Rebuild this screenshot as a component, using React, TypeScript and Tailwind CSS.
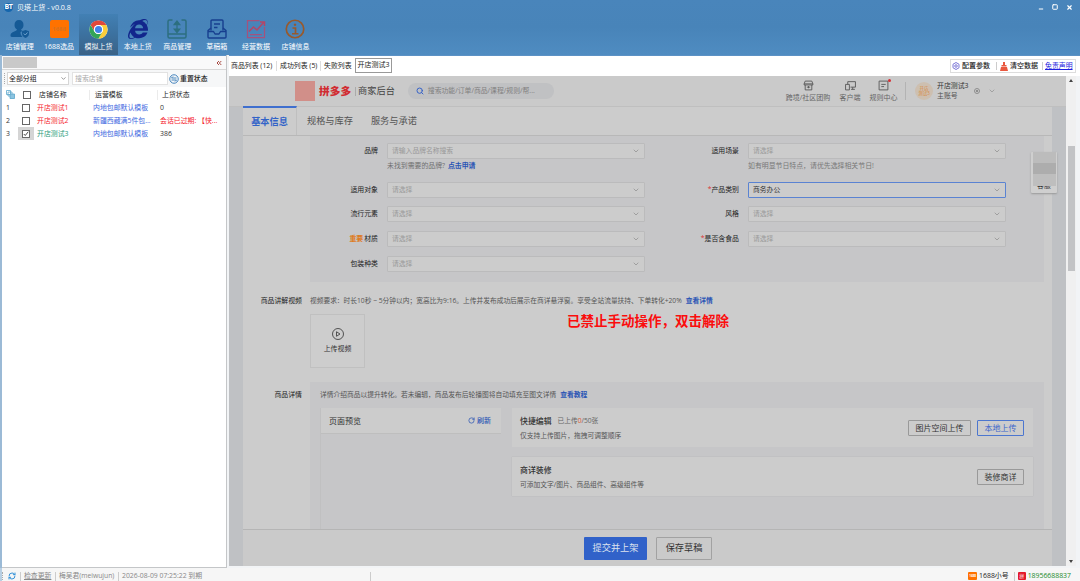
import type { ReactNode } from "react";
import { FaInternetExplorer } from "react-icons/fa";
import { ChevronDown, ChevronsLeft, Search, RefreshCw, RotateCw, Minus, Square, X } from "lucide-react";

function ChromeLogo() {
  return (
    <svg viewBox="0 0 48 48" className="h-[19px] w-[19px]">
      <circle cx="24" cy="24" r="23" fill="#fff" />
      <path d="M4.1 12.5A23 23 0 0 1 43.9 12.5L24 12.5A11.5 11.5 0 0 0 14 29.7Z" fill="#e0483b" />
      <path d="M43.9 12.5A23 23 0 0 1 24 47L34 29.7A11.5 11.5 0 0 0 24 12.5Z" fill="#fbcd3a" />
      <path d="M24 47A23 23 0 0 1 4.1 12.5L14 29.7A11.5 11.5 0 0 0 34 29.7Z" fill="#33a457" />
      <circle cx="24" cy="24" r="11.5" fill="#fff" />
      <circle cx="24" cy="24" r="9" fill="#3f82ea" />
    </svg>
  );
}

function UserShield() {
  return (
    <svg viewBox="0 0 40 40" className="h-[20px] w-[20px]">
      <path d="M18 2c-6 0-9 4-9 10 0 4 2 7 5 9-1 4-12 4-13 11-.3 2 .5 4 3 4h21c-3-3-4-6-4-10l4-2c-2-1-3-2-3-3 3-2 5-5 5-9 0-6-3-10-9-10z" fill="#155a96" />
      <path d="M31 22l7 2.500v5c0 4-3 7-7 8.500-4-1.500-7-4.500-7-8.500v-5z" fill="#155a96" />
      <path d="M27.500 29l3 3 4.500-5" fill="none" stroke="#6fa3cf" strokeWidth="2" />
    </svg>
  );
}

function ImportExport() {
  return (
    <svg viewBox="0 0 40 40" className="h-[20px] w-[20px]" fill="none" stroke="#2c6f80" strokeWidth="3">
      <path d="M11 2H5a3 3 0 0 0-3 3v30a3 3 0 0 0 3 3h30a3 3 0 0 0 3-3V5a3 3 0 0 0-3-3h-6M2 30h36" />
      <path d="M20 7v16M14.500 11l5.500-7 5.500 7zM14.500 20l5.500 7 5.500-7z" fill="#2c6f80" strokeWidth="2.500" />
    </svg>
  );
}

function DraftBox() {
  return (
    <svg viewBox="0 0 40 40" className="h-[20px] w-[20px]" fill="none" stroke="#173f8f" strokeWidth="2.800" strokeLinejoin="round">
      <path d="M8 23V4a2 2 0 0 1 2-2h20a2 2 0 0 1 2 2v19" />
      <path d="M14 10h12M14 17h7M8 18l-6 5v13a2 2 0 0 0 2 2h32a2 2 0 0 0 2-2V23l-6-5M2 25h11l3 5h8l3-5h11" />
    </svg>
  );
}

function TrendChart() {
  return (
    <svg viewBox="0 0 40 40" className="h-[20px] w-[20px]" fill="none" stroke="#a4527d" strokeWidth="2.500">
      <path d="M27 3H3v34h34V16M8 31h24" />
      <path d="M6 25l9-9 7 6L35 7M28 6h9v8" stroke="#b34668" strokeWidth="3" />
    </svg>
  );
}

function InfoCircle() {
  return (
    <svg viewBox="0 0 40 40" className="h-[20px] w-[20px]" fill="none" stroke="#98592c" strokeWidth="3.400">
      <circle cx="20" cy="20" r="17.500" />
      <path d="M15 18h6v11M14 29.500h13" />
      <circle cx="20" cy="11.500" r="2" fill="#98592c" strokeWidth="1" />
    </svg>
  );
}

const tools: { label: string; icon: ReactNode; active?: boolean }[] = [
  { label: "店铺管理", icon: <UserShield /> },
  {
    label: "1688选品",
    icon: <div className="flex h-[18px] w-[19px] items-center justify-center rounded-[2px] bg-[#ff7200] text-[6px] font-bold text-[#d9731f]">1688</div>,
  },
  { label: "模拟上货", icon: <ChromeLogo />, active: true },
  { label: "本地上货", icon: <FaInternetExplorer className="h-[20px] w-[20px] text-[#12268c]" /> },
  { label: "商品管理", icon: <ImportExport /> },
  { label: "草稿箱", icon: <DraftBox /> },
  { label: "经营数据", icon: <TrendChart /> },
  { label: "店铺信息", icon: <InfoCircle /> },
];

function TitleArea() {
  return (
    <header className="h-[55px] shrink-0 bg-gradient-to-b from-[#4985bb] via-[#4884b9] to-[#4f8cc1]">
      <div className="flex h-[14px] items-center pl-[4px] text-[7.100px] text-white">
        <div className="flex h-[9px] w-[9px] items-center justify-center rounded-full bg-[#1566ad] text-[7px] font-bold tracking-[-0.5px]">BT</div>
        <span className="ml-[4px]">贝塔上货&nbsp;- v0.0.8</span>
        <div className="ml-auto flex items-center gap-[8px] pr-[7px]">
          <Minus className="mt-[4px] h-[6px] w-[6px]" strokeWidth={4} />
          <Square className="h-[6px] w-[6px]" strokeWidth={4} />
          <X className="h-[7px] w-[7px]" strokeWidth={4} />
        </div>
      </div>
      <div className="flex h-[41px]">
        {tools.map((t) => (
          <div
            key={t.label}
            className={
              t.active
                ? "flex w-[39.400px] flex-col items-center bg-gradient-to-b from-[#4280b4] via-[#3c719f] to-[#3a6287] pt-[5px]"
                : "flex w-[39.400px] flex-col items-center pt-[5px]"
            }
          >
            <div className="flex h-[20px] items-center">{t.icon}</div>
            <span className="mt-[3px] text-[7px] leading-[9px] text-white">{t.label}</span>
          </div>
        ))}
      </div>
    </header>
  );
}

const shops = [
  { id: 1, name: "开店测试1", color: "text-[#f5222d]", tpl: "内地包邮默认模板", status: "0", sc: "text-[#333]", on: false },
  { id: 2, name: "开店测试2", color: "text-[#f5222d]", tpl: "新疆西藏满5件包...", status: "会话已过期: 【快...", sc: "text-[#f5222d]", on: false },
  { id: 3, name: "开店测试3", color: "text-[#2c9b7c]", tpl: "内地包邮默认模板", status: "386", sc: "text-[#333]", on: true },
];

function Check({ on = false }: { on?: boolean }) {
  return (
    <div className="flex h-[8px] w-[8px] items-center justify-center border border-[#666] bg-white">
      {on && (
        <svg viewBox="0 0 8 8" className="h-[6px] w-[6px]" fill="none" stroke="#333" strokeWidth="1.200">
          <path d="M1 4l2 2 4-5" />
        </svg>
      )}
    </div>
  );
}

function ShopPanel() {
  return (
    <aside className="flex h-[513px] w-[225px] shrink-0 flex-col border-b border-r border-[#c4c6c8] bg-white text-[6.900px] text-[#222]">
      <div className="flex h-[15px] items-center justify-between border-b border-t border-b-[#d8d8d8] border-t-[#5c92c5] bg-[#f9f9fa]">
        <div className="ml-[1px] h-[11px] w-[34px] bg-[#c9c9c9]" />
        <ChevronsLeft className="mr-[3px] h-[8px] w-[8px] text-[#a5453c]" strokeWidth={3} />
      </div>
      <div className="flex h-[17px] items-center bg-[#f6f7f8] pl-[2px]">
        <div className="h-[11px] border-l border-dotted border-[#aaa]" />
        <div className="ml-[2px] flex h-[13px] w-[62px] items-center justify-between border border-[#d6d6d6] bg-white px-[1px]">
          <span>全部分组</span>
          <ChevronDown className="h-[7px] w-[7px] text-[#555]" />
        </div>
        <div className="ml-[3px] flex h-[13px] w-[96px] items-center border border-[#e2e2e2] bg-white pl-[2px] text-[#aaa]">搜索店铺</div>
        <svg viewBox="0 0 20 20" className="ml-[1px] h-[10px] w-[10px]" fill="none" stroke="#3479b8" strokeWidth="1.800">
          <circle cx="10" cy="10" r="8.500" />
          <path d="M15 8H5l3-3M5 12h10l-3 3" />
        </svg>
        <span className="ml-[1px] font-medium">重置状态</span>
      </div>
      <div className="mt-[1px] flex h-[13px] items-center">
        <div className="w-[18px] pl-[4px]">
          <svg viewBox="0 0 18 18" className="h-[9px] w-[9px]" fill="#fff" stroke="#5aa6cc" strokeWidth="1.600">
            <path d="M1 1h8v8H1zM4 4h8v8H4z" />
            <path d="M8 8h9v9H8z" fill="#8cc4e0" />
          </svg>
        </div>
        <div className="flex w-[14px] justify-center pr-[1px]"><Check /></div>
        <div className="w-[56px] border-r border-[#ebebeb] pl-[5px]">店铺名称</div>
        <div className="w-[68px] border-r border-[#ebebeb] pl-[5px]">运营模板</div>
        <div className="pl-[4px]">上货状态</div>
      </div>
      {shops.map((s) => (
        <div key={s.id} className="flex h-[13px] items-center">
          <div className="w-[16px] pl-[4px] text-[#333]">{s.id}</div>
          <div className={s.on ? "flex h-[13px] w-[16px] items-center justify-center bg-[#d5d5d5]" : "flex h-[13px] w-[16px] items-center justify-center"}>
            <Check on={s.on} />
          </div>
          <div className={`w-[56px] pl-[3px] ${s.color}`}>{s.name}</div>
          <div className="w-[68px] pl-[3px] text-[#4169e1]">{s.tpl}</div>
          <div className={`pl-[2px] ${s.sc}`}>{s.status}</div>
        </div>
      ))}
    </aside>
  );
}

function ViewTabs() {
  return (
    <div className="flex h-[20px] items-center bg-white text-[7px] text-[#222]">
      <span className="w-[48px] border-r border-[#ddd] pl-[2px] text-[6.900px]">商品列表 (12)</span>
      <span className="w-[44px] border-r border-[#ddd] pl-[3px] text-[6.900px]">成功列表 (5)</span>
      <span className="w-[33px] pl-[3px] text-[6.900px]">失败列表</span>
      <div className="mb-[1px] ml-[1px] flex h-[15px] w-[37px] items-center justify-center border border-[#999] pb-[1px]">开店测试3</div>
      <div className="ml-auto mr-[4px] flex h-[14px] w-[126px] items-center border border-[#ddd]">
        <svg viewBox="0 0 16 16" className="ml-[1px] h-[8px] w-[8px]" fill="none" stroke="#7b76d6" strokeWidth="2">
          <path d="M8 1l6 3.500v7L8 15l-6-3.500v-7z" />
          <circle cx="8" cy="8" r="2.500" />
        </svg>
        <span className="ml-[2px] font-medium">配置参数</span>
        <div className="ml-[6px] h-[8px] w-px bg-[#ccc]" />
        <svg viewBox="0 0 16 18" className="ml-[3px] h-[9px] w-[8px]" fill="#e9583f">
          <path d="M6 0h4v6h3v3H3V6h3zM2 10h12l2 8H0z" />
        </svg>
        <span className="ml-[2px] font-medium">清空数据</span>
        <div className="ml-[4px] h-[8px] w-px bg-[#ccc]" />
        <span className="ml-[2px] text-[6.900px] text-[#1f1fe0] underline">免责声明</span>
      </div>
    </div>
  );
}

function HeaderLink({ label, width, children }: { label: string; width: string; children: ReactNode }) {
  return (
    <div className={`flex flex-col items-center ${width}`}>
      <svg viewBox="0 0 20 20" className="h-[11px] w-[11px]" fill="none" stroke="#555" strokeWidth="1.600">
        {children}
      </svg>
      <span className="mt-[2px] text-[7px] leading-[9px] text-[#666]">{label}</span>
    </div>
  );
}

function ShopHeader() {
  return (
    <div className="flex h-[31px] items-center border-b border-[#bfbfbf] bg-[#cacaca] pl-[66px]">
      <div className="h-[20px] w-[20px] bg-[#d18f89]" />
      <span className="ml-[4px] text-[10.700px] font-black text-[#d12c31]">拼多多</span>
      <div className="ml-[4px] h-[9px] w-px bg-[#aaa]" />
      <span className="ml-[2px] text-[9.200px] text-[#444]">商家后台</span>
      <div className="ml-[13px] flex h-[16px] w-[146px] items-center rounded-full bg-[#c0c1c3] pl-[8px]">
        <Search className="h-[8px] w-[8px] text-[#3562c9]" strokeWidth={3} />
        <span className="ml-[4px] text-[6.850px] text-[#808080]">搜索功能/订单/商品/课程/规则/帮...</span>
      </div>
      <div className="ml-auto flex items-center pr-[70px]">
        <HeaderLink label="跨境/社区团购" width="w-[44px]">
          <path d="M4 2h12l2 5v2H2V7zM4 9v9h12V9M7 13h6M10 11v4M2 7h16" />
        </HeaderLink>
        <HeaderLink label="客户端" width="w-[40px]">
          <path d="M5 8V3h14v10h-9M1 8h7v10H1zM11 17h7M14 13v4" />
        </HeaderLink>
        <div className="relative">
          <HeaderLink label="规则中心" width="w-[27px]">
            <path d="M2 2h16v16H2zM6 8h8M6 12h5" />
          </HeaderLink>
          <div className="absolute -top-[1px] left-[18px] h-[3px] w-[3px] rounded-full bg-[#d52f35]" />
        </div>
        <div className="ml-[8px] h-[18px] w-px bg-[#b3b3b3]" />
        <div className="ml-[9px] flex h-[18px] w-[18px] flex-col items-center justify-center rounded-full bg-[#cdbfb0] text-[4.500px] leading-[5px] text-[#d88a43]">
          <span>开店</span>
          <span>测试3</span>
        </div>
        <div className="ml-[4px] flex w-[37px] flex-col text-[6.900px] leading-[10px]">
          <span className="text-[#333]">开店测试3</span>
          <span className="text-[#555]">主账号</span>
        </div>
        <div className="flex h-[6px] w-[6px] items-center justify-center rounded-full border border-[#8d8d8d]">
          <div className="h-[2px] w-[2px] bg-[#8d8d8d]" />
        </div>
        <ChevronDown className="ml-[8px] h-[8px] w-[8px] text-[#8d8d8d]" />
      </div>
    </div>
  );
}

function Field({ label, value, width, active, required, important }: { label: string; value: string; width: string; active?: boolean; required?: boolean; important?: boolean }) {
  return (
    <div className="flex h-[16px] items-center">
      <div className={`flex justify-end pr-[9px] text-[6.900px] text-[#222] ${width}`}>
        {required && <span className="text-[#d33]">*</span>}
        {important && <span className="mr-[1px] font-bold text-[#df7a1c]">重要</span>}
        <span>{label}</span>
      </div>
      <div
        className={
          active
            ? "flex h-[16px] w-[258px] items-center justify-between rounded-[1px] border border-[#5a83d2] bg-[#cccccc] px-[4px] text-[#333]"
            : "flex h-[16px] w-[258px] items-center justify-between rounded-[1px] border border-[#bbbbbc] bg-[#cccccc] px-[4px] text-[#999]"
        }
      >
        <span className="text-[6.800px]">{value}</span>
        <ChevronDown className="h-[8px] w-[8px] text-[#888]" />
      </div>
    </div>
  );
}

function AttributeForm() {
  return (
    <div className="ml-[67px] flex h-[146px] w-[734px] bg-[#c6c6c8] pt-[6.500px]">
      <div className="flex w-[335px] flex-col">
        <Field label="品牌" value="请输入品牌名称搜索" width="w-[77px]" />
        <div className="h-[23px] pl-[77px] pt-[2px] text-[6.900px] text-[#707070]">
          未找到需要的品牌? <span className="ml-[1px] font-semibold text-[#2b55b5]">点击申请</span>
        </div>
        <div className="flex flex-col gap-[8.800px]">
          <Field label="适用对象" value="请选择" width="w-[77px]" />
          <Field label="流行元素" value="请选择" width="w-[77px]" />
          <Field label="材质" value="请选择" width="w-[77px]" important />
          <Field label="包装种类" value="请选择" width="w-[77px]" />
        </div>
      </div>
      <div className="ml-[23px] flex flex-col">
        <Field label="适用场景" value="请选择" width="w-[80px]" />
        <div className="h-[23px] pl-[80px] pt-[2px] text-[6.900px] text-[#777]">如有明显节日特点，请优先选择相关节日!</div>
        <div className="flex flex-col gap-[8.800px]">
          <Field label="产品类别" value="商务办公" width="w-[80px]" active required />
          <Field label="风格" value="请选择" width="w-[80px]" />
          <Field label="是否含食品" value="请选择" width="w-[80px]" required />
        </div>
      </div>
    </div>
  );
}

function VideoSection() {
  return (
    <div className="flex h-[100px] pt-[14px] text-[6.900px]">
      <span className="w-[67px] pr-[8px] text-right text-[#222]">商品讲解视频</span>
      <div className="flex flex-col">
        <p className="h-[18px] text-[6.730px] text-[#555]">
          视频要求：时长10秒 ~ 5分钟以内；宽高比为9:16。上传并发布成功后展示在商详悬浮窗。享受全站流量扶持、下单转化+20%
          <span className="ml-[4px] font-semibold text-[#2b55b5]">查看详情</span>
        </p>
        <div className="flex h-[54px] w-[55px] flex-col items-center justify-center gap-[4px] border border-[#c0c0c0] bg-[#cdcdcd] text-[#333]">
          <svg viewBox="0 0 24 24" className="h-[12px] w-[12px]" fill="none" stroke="#444" strokeWidth="1.800">
            <circle cx="12" cy="12" r="11" />
            <path d="M9 7.500l7 4.500-7 4.500z" />
          </svg>
          <span>上传视频</span>
        </div>
      </div>
    </div>
  );
}

function DetailSection() {
  return (
    <div className="flex h-[147px]">
      <span className="w-[67px] pr-[8px] pt-[8px] text-right text-[6.900px] text-[#222]">商品详情</span>
      <div className="flex w-[734px] flex-col bg-[#c6c6c8] pl-[10px] pt-[8px]">
        <p className="h-[18px] text-[6.760px] text-[#555]">
          详情介绍商品以提升转化。若未编辑，商品发布后轮播图将自动填充至图文详情
          <span className="ml-[4px] font-semibold text-[#2b55b5]">查看教程</span>
        </p>
        <div className="flex flex-1 gap-[11px]">
          <div className="flex w-[181px] flex-col border-l border-[#c0c0c1]">
            <div className="flex h-[26px] items-center justify-between border-b border-[#bebebe] bg-[#cccccc] pl-[8px] pr-[10px]">
              <span className="text-[8px] text-[#333]">页面预览</span>
              <span className="flex items-center gap-[2px] text-[7px] font-medium text-[#2b55b5]">
                <RotateCw className="h-[7px] w-[7px]" strokeWidth={2.5} />
                刷新
              </span>
            </div>
          </div>
          <div className="flex flex-col gap-[10px]">
            <div className="flex h-[39px] w-[521px] items-center justify-between bg-[#cccccc] pl-[8px] pr-[9px]">
              <div className="flex flex-col gap-[3px]">
                <div className="flex items-center leading-[12px]">
                  <span className="text-[7.900px] font-medium text-[#333]">快捷编辑</span>
                  <span className="ml-[6px] text-[6.700px] text-[#666]">已上传<span className="text-[#e0562e]">0</span>/50张</span>
                </div>
                <span className="text-[6.750px] leading-[11px] text-[#555]">仅支持上传图片，拖拽可调整顺序</span>
              </div>
              <div className="mt-[1px] flex gap-[6px] text-[8px] text-[#333]">
                <button className="h-[16px] w-[63px] rounded-[1px] border border-[#999] leading-[14px]">图片空间上传</button>
                <button className="h-[16px] w-[47px] rounded-[1px] border border-[#4c76cf] leading-[14px] text-[#3c66cb]">本地上传</button>
              </div>
            </div>
            <div className="flex h-[39px] w-[521px] items-center justify-between bg-[#cccccc] pl-[8px] pr-[9px] shadow-[0_0_1px_#aaa]">
              <div className="flex flex-col gap-[3px]">
                <span className="text-[7.900px] font-medium leading-[12px] text-[#333]">商详装修</span>
                <span className="text-[6.750px] leading-[11px] text-[#555]">可添加文字/图片、商品组件、高级组件等</span>
              </div>
              <button className="h-[16px] w-[47px] rounded-[1px] border border-[#999] text-[8px] leading-[14px] text-[#333]">装修商详</button>
            </div>
          </div>
        </div>
      </div>
    </div>
  );
}

function Browser() {
  return (
    <div className="relative h-[490px] w-[837px] bg-[#bfc1c4]">
      <ShopHeader />
      <div className="mx-[14px] flex h-[459px] flex-col bg-[#cccccc]">
        <div className="flex h-[29px] shrink-0 items-center border-b border-[#b8b8b8] text-[9.200px] text-[#555]">
          <div className="-mt-[1px] flex h-[29px] w-[54px] items-center justify-center border-r border-t-2 border-r-[#bfbfbf] border-t-[#3f6fce] font-bold text-[#3263c8]">基本信息</div>
          <span className="ml-[10px]">规格与库存</span>
          <span className="ml-[18px]">服务与承诺</span>
        </div>
        <AttributeForm />
        <VideoSection />
        <DetailSection />
        <div className="flex h-[37px] items-center gap-[9px] border-t border-[#b5b5b5] bg-[#cacaca] pl-[341px] text-[9.200px]">
          <button className="h-[23px] w-[63px] rounded-[1px] bg-[#3162c9] text-[#dde3ef]">提交并上架</button>
          <button className="h-[23px] w-[56px] rounded-[1px] border border-[#a2a2a2] text-[#333]">保存草稿</button>
        </div>
      </div>
      <div className="absolute left-[338px] top-[235px] text-[13.500px] font-bold leading-[20px] text-[#fb0d0d]">已禁止手动操作，双击解除</div>
      <div className="absolute left-[802px] top-[76px] flex h-[41px] w-[26px] flex-col items-center rounded-[1px] bg-[#cfcfcf] shadow-[0_1px_2px_#999]">
        <div className="z-10 h-[11px] w-[23px] bg-[#bcbcbc]" />
        <div className="z-10 h-[11px] w-[23px] bg-[#adadad]" />
        <div className="z-10 h-[12px] w-[23px] bg-[#bebebe]" />
        <span className="-mt-[5px] text-[6.900px] leading-[10px] text-[#333]">客服</span>
      </div>
    </div>
  );
}

function ScrollTrack() {
  return (
    <div className="flex w-[10px] flex-col items-center bg-[#f0f0f0] py-[3px]">
      <div className="h-0 w-0 border-x-[2px] border-b-[3px] border-x-transparent border-b-[#444]" />
      <div className="mt-[64px] h-[125px] w-[7px] bg-[#c2c3c5]" />
      <div className="mt-auto h-0 w-0 border-x-[2px] border-t-[3px] border-x-transparent border-t-[#444]" />
    </div>
  );
}

function StatusBar() {
  return (
    <footer className="flex h-[13px] shrink-0 items-center border-l-2 border-[#b8cfe3] bg-[#f6f6f6] pt-[3px] text-[6.850px] text-[#888]">
      <div className="h-[8px] border-l border-dotted border-[#aaa]" />
      <RefreshCw className="ml-[5px] h-[8px] w-[8px] text-[#3592d8]" strokeWidth={3} />
      <div className="ml-[4px] h-[9px] w-px bg-[#ccc]" />
      <span className="ml-[3px] w-[28px] underline">检查更新</span>
      <div className="ml-[3px] h-[9px] w-px bg-[#ccc]" />
      <span className="ml-[3px] w-[56px] text-[6.750px]">梅吴君(meiwujun)</span>
      <div className="ml-[3px] h-[9px] w-px bg-[#ccc]" />
      <span className="ml-[3px]">2026-08-09 07:25:22 到期</span>
      <div className="ml-[168px] h-[9px] w-px bg-[#ccc]" />
      <div className="ml-auto flex items-center pr-[9px] text-[6.900px] text-[#222]">
        <div className="h-[8px] w-[9px] rounded-[1px] bg-[#ff7200] text-center text-[3px] font-bold leading-[8px] text-white">1688</div>
        <span className="ml-[2px]">1688小号</span>
        <div className="ml-[5px] h-[9px] w-px bg-[#ccc]" />
        <div className="ml-[3px] h-[8px] w-[8px] rounded-[1px] bg-[#e3192b] text-center text-[5px] leading-[8px] text-white">拼</div>
        <span className="ml-[2px] text-[#208a2b]">18956688837</span>
      </div>
    </footer>
  );
}

export default function App() {
  return (
    <div className="flex h-[581px] w-[1080px] flex-col overflow-hidden whitespace-nowrap bg-[#f2f4f6] font-['Open_Sans','Noto_Sans_CJK_SC',sans-serif] leading-[10px]">
      <TitleArea />
      <div className="flex h-[513px] shrink-0 border-l-2 border-[#9bbad6]">
        <ShopPanel />
        <main className="ml-[2px] flex w-[851px] flex-col">
          <div className="h-px bg-[#5c92c5]" />
          <ViewTabs />
          <div className="flex h-[490px]">
            <Browser />
            <ScrollTrack />
          </div>
        </main>
      </div>
      <StatusBar />
    </div>
  );
}
